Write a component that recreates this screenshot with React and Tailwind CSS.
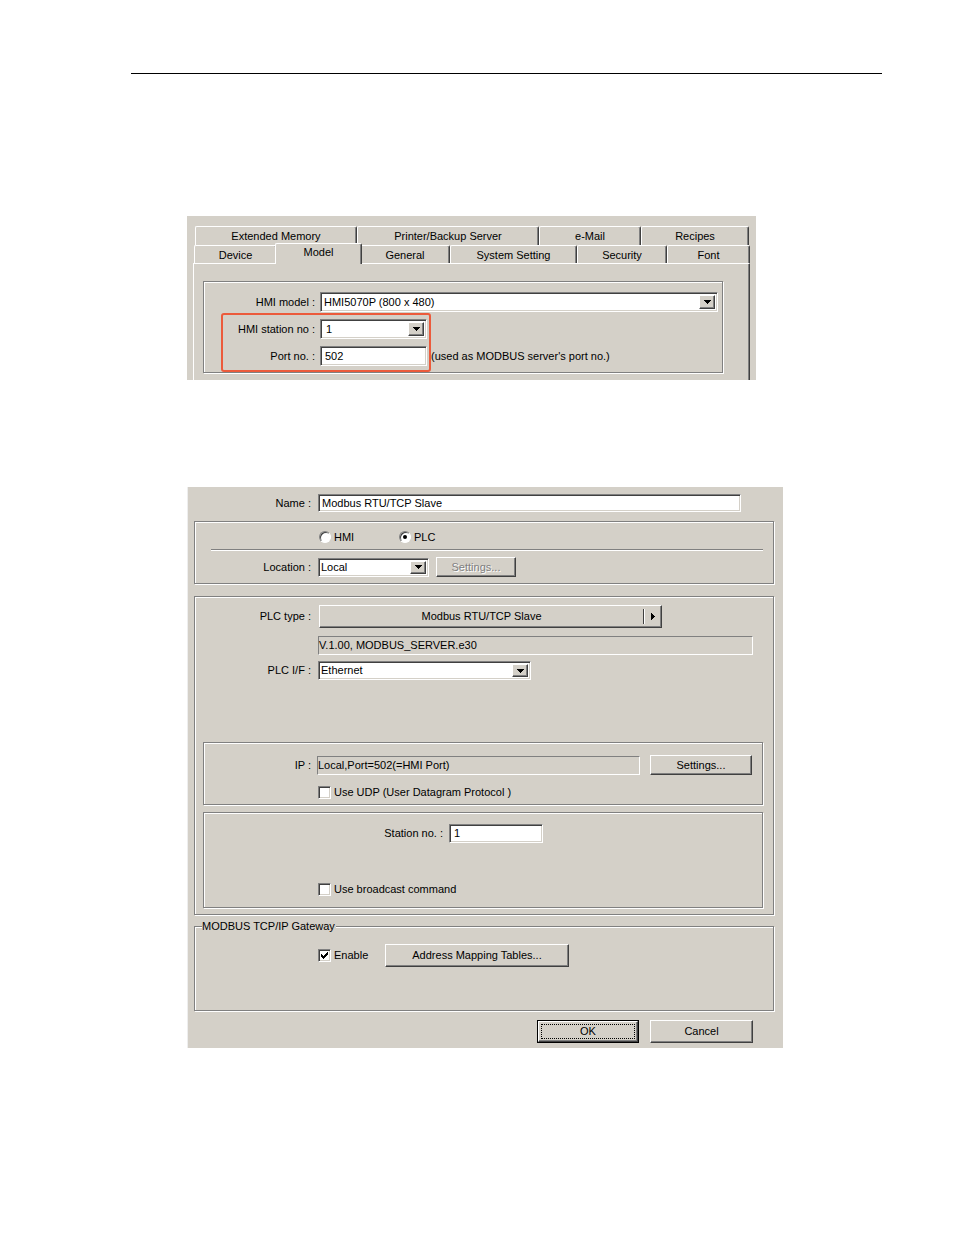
import clsx from 'clsx'

const raised =
  'border border-t-white border-l-white border-b-[#404040] border-r-[#404040] shadow-[inset_-1px_-1px_0_#808080] bg-[#d4d0c8]'
const sunken =
  'border border-t-[#808080] border-l-[#808080] border-b-white border-r-white shadow-[inset_1px_1px_0_#404040,inset_-1px_-1px_0_#d4d0c8]'
const etched = 'border border-[#808080] shadow-[inset_1px_1px_0_#fff,1px_1px_0_#fff]'

function DownArrow() {
  return (
    <svg width="7" height="4" viewBox="0 0 7 4" shapeRendering="crispEdges">
      <path d="M0 0h7v1h-1v1h-1v1h-1v1h-1v-1h-1v-1h-1v-1h-1z" fill="#000" />
    </svg>
  )
}

function RightArrow() {
  return (
    <svg width="4" height="7" viewBox="0 0 4 7" shapeRendering="crispEdges">
      <path d="M0 0h1v1h1v1h1v1h1v1h-1v1h-1v1h-1v1h-1z" fill="#000" />
    </svg>
  )
}

function Field({ className, children, pad = 'pl-[3px]' }) {
  return (
    <div className={clsx(sunken, 'bg-white flex items-center', pad, className)}>
      {children}
    </div>
  )
}

function Combo({ className, value, pad = 'pl-[2px]' }) {
  return (
    <div className={clsx(sunken, 'bg-white flex items-stretch p-[2px]', className)}>
      <div className={clsx('flex-1 flex items-center', pad)}>{value}</div>
      <div className={clsx(raised, 'w-[16px] flex items-center justify-center')}>
        <DownArrow />
      </div>
    </div>
  )
}

function Button({ className, children, disabled }) {
  return (
    <div className={clsx(raised, 'flex items-center justify-center', className)}>
      <span className={clsx(disabled && 'text-[#808080] [text-shadow:1px_1px_0_#fff]')}>{children}</span>
    </div>
  )
}

function ReadOnly({ className, children }) {
  return (
    <div
      className={clsx(
        'border border-t-[#808080] border-l-[#808080] border-b-white border-r-white bg-[#d4d0c8] flex items-center',
        className
      )}
    >
      {children}
    </div>
  )
}

function Radio({ checked, label, className }) {
  return (
    <div className={clsx('flex items-center gap-[3px]', className)}>
      <div className="w-[12px] h-[12px] rounded-full bg-white border border-t-[#808080] border-l-[#808080] border-b-white border-r-white shadow-[inset_1px_1px_0_#404040] flex items-center justify-center">
        {checked && <div className="w-[4px] h-[4px] rounded-full bg-black" />}
      </div>
      <span>{label}</span>
    </div>
  )
}

function Check({ checked, label, className }) {
  return (
    <div className={clsx('flex items-center gap-[3px]', className)}>
      <div className={clsx(sunken, 'w-[13px] h-[13px] bg-white flex items-center justify-center')}>
        {checked && (
          <svg width="7" height="7" viewBox="0 0 7 7" shapeRendering="crispEdges">
            <path d="M0 2h1v1h1v1h1v-1h1v-1h1v-1h1v-1h1v3h-1v1h-1v1h-1v1h-1v1h-1v-1h-1v-1h-1z" fill="#000" />
          </svg>
        )}
      </div>
      <span>{label}</span>
    </div>
  )
}

function Tab({ label, w, selected }) {
  return (
    <div
      className={clsx(
        'border-t border-l border-white border-r border-r-[#404040] shadow-[inset_-1px_0_0_#808080] rounded-tl-[2px] rounded-tr-[2px] bg-[#d4d0c8] flex justify-center shrink-0',
        selected ? 'relative z-10 h-[21px] -mt-[2px] -mb-px -mx-[2px] pt-[3px]' : 'h-full pt-[4px]'
      )}
      style={{ width: selected ? w + 4 : w }}
    >
      {label}
    </div>
  )
}

function SystemParams() {
  const row1 = [
    ['Extended Memory', 162],
    ['Printer/Backup Server', 182],
    ['e-Mail', 102],
    ['Recipes', 108],
  ]
  const row2 = [
    ['Device', 83],
    ['Model', 83, true],
    ['General', 90],
    ['System Setting', 127],
    ['Security', 90],
    ['Font', 83],
  ]
  return (
    <div className="relative ml-[187px] mt-[142px] w-[569px] h-[164px] bg-[#d4d0c8] overflow-hidden">
      <div className="pt-[10px]">
        <div className="flex ml-[8px] h-[19px]">
          {row1.map(([l, w]) => (
            <Tab key={l} label={l} w={w} />
          ))}
        </div>
        <div className="flex ml-[7px] h-[18px]">
          {row2.map(([l, w, s]) => (
            <Tab key={l} label={l} w={w} selected={s} />
          ))}
        </div>
        <div className="ml-[6px] w-[557px] h-[140px] border-t border-l border-white border-r border-r-[#404040] shadow-[inset_-1px_0_0_#808080]">
          <div className={clsx(etched, 'ml-[9px] mt-[17px] w-[520px] h-[92px] pt-[10px]')}>
            <div className="flex items-center h-[20px]">
              <div className="w-[111px] text-right">HMI model :</div>
              <Combo className="ml-[5px] w-[398px] h-[20px]" value="HMI5070P (800 x 480)" pad="pl-[1px]" />
            </div>
            <div className="flex items-center h-[20px] mt-[7px]">
              <div className="w-[111px] text-right">HMI station no :</div>
              <Combo className="ml-[5px] w-[107px] h-[20px]" value="1" pad="pl-[3px]" />
            </div>
            <div className="flex items-center h-[20px] mt-[7px]">
              <div className="w-[111px] text-right">Port no. :</div>
              <Field className="ml-[5px] w-[107px] h-[20px]" pad="pl-[4px]">502</Field>
              <span className="ml-[4px]">(used as MODBUS server's port no.)</span>
            </div>
          </div>
        </div>
      </div>
      <div className="absolute left-[34px] top-[97px] w-[210px] h-[59px] border-2 border-[#ec5a3b] rounded-[3px]" />
    </div>
  )
}

function DeviceDialog() {
  return (
    <div className="ml-[187px] mt-[107px] w-[596px] h-[561px] bg-[#d4d0c8] border-l border-l-[#eeeeee] pt-[7px]">
      <div className="flex items-center h-[18px]">
        <div className="w-[123px] text-right">Name :</div>
        <Field className="ml-[7px] w-[423px] h-[18px]" pad="pl-[3px]">Modbus RTU/TCP Slave</Field>
      </div>

      <div className={clsx(etched, 'ml-[6px] mt-[9px] w-[580px] h-[63px] pt-[9px]')}>
        <div className="flex items-center h-[12px] pl-[124px]">
          <Radio label="HMI" className="w-[80px]" />
          <Radio label="PLC" checked />
        </div>
        <div className="ml-[16px] mr-[10px] mt-[6px] h-[2px] border-t border-t-[#808080] border-b border-b-white" />
        <div className="flex items-center h-[20px] mt-[6px]">
          <div className="w-[116px] text-right">Location :</div>
          <Combo className="ml-[7px] w-[111px] h-[19px]" value="Local" pad="pl-0" />
          <Button className="ml-[7px] w-[80px] h-[20px]" disabled>
            Settings...
          </Button>
        </div>
      </div>

      <div className={clsx(etched, 'ml-[6px] mt-[12px] w-[580px] h-[319px] pt-[8px]')}>
        <div className="flex items-center h-[23px]">
          <div className="w-[116px] text-right">PLC type :</div>
          <div className={clsx(raised, 'ml-[8px] w-[343px] h-[23px] flex items-stretch')}>
            <div className="flex-1 flex items-center justify-center">Modbus RTU/TCP Slave</div>
            <div className="my-[3px] w-[2px] border-l border-l-[#404040] border-r border-r-white" />
            <div className="w-[16px] flex items-center justify-center">
              <RightArrow />
            </div>
          </div>
        </div>
        <ReadOnly className="ml-[123px] mt-[8px] w-[435px] h-[19px]">V.1.00, MODBUS_SERVER.e30</ReadOnly>
        <div className="flex items-center h-[19px] mt-[6px]">
          <div className="w-[116px] text-right">PLC I/F :</div>
          <Combo className="ml-[7px] w-[213px] h-[19px]" value="Ethernet" pad="pl-0" />
        </div>

        <div className={clsx(etched, 'ml-[8px] mt-[62px] w-[560px] h-[63px] pt-[12px]')}>
          <div className="flex items-center h-[20px]">
            <div className="w-[107px] text-right">IP :</div>
            <ReadOnly className="ml-[6px] w-[323px] h-[19px]">Local,Port=502(=HMI Port)</ReadOnly>
            <Button className="ml-[10px] w-[102px] h-[20px]">Settings...</Button>
          </div>
          <Check label="Use UDP (User Datagram Protocol )" className="ml-[114px] mt-[11px]" />
        </div>

        <div className={clsx(etched, 'ml-[8px] mt-[7px] w-[560px] h-[96px] pt-[11px]')}>
          <div className="flex items-center h-[19px]">
            <div className="w-[239px] text-right">Station no. :</div>
            <Field className="ml-[6px] w-[94px] h-[19px]" pad="pl-[4px]">1</Field>
          </div>
          <Check label="Use broadcast command" className="ml-[114px] mt-[40px]" />
        </div>
      </div>

      <div className={clsx(etched, 'relative ml-[6px] mt-[11px] w-[580px] h-[85px] pt-[17px]')}>
        <span className="absolute left-[7px] -top-[6px] bg-[#d4d0c8] pr-[1px]">MODBUS TCP/IP Gateway</span>
        <div className="flex items-center h-[23px] ml-[123px]">
          <Check label="Enable" checked className="w-[67px]" />
          <Button className="w-[184px] h-[23px]">Address Mapping Tables...</Button>
        </div>
      </div>

      <div className="flex mt-[9px] ml-[349px]">
        <div className="w-[102px] h-[23px] border border-black flex">
          <div className={clsx(raised, 'flex-1 p-[2px] flex')}>
            <div className="flex-1 border border-dotted border-black flex items-center justify-center">OK</div>
          </div>
        </div>
        <Button className="ml-[11px] w-[103px] h-[23px]">Cancel</Button>
      </div>
    </div>
  )
}

export default function App() {
  return (
    <div className="w-[954px] h-[1235px] bg-white font-['Liberation_Sans',Arial,sans-serif] text-[11px] leading-none text-black overflow-hidden">
      <div className="pt-[73px]">
        <div className="ml-[131px] w-[751px] h-px bg-black" />
      </div>
      <SystemParams />
      <DeviceDialog />
    </div>
  )
}
